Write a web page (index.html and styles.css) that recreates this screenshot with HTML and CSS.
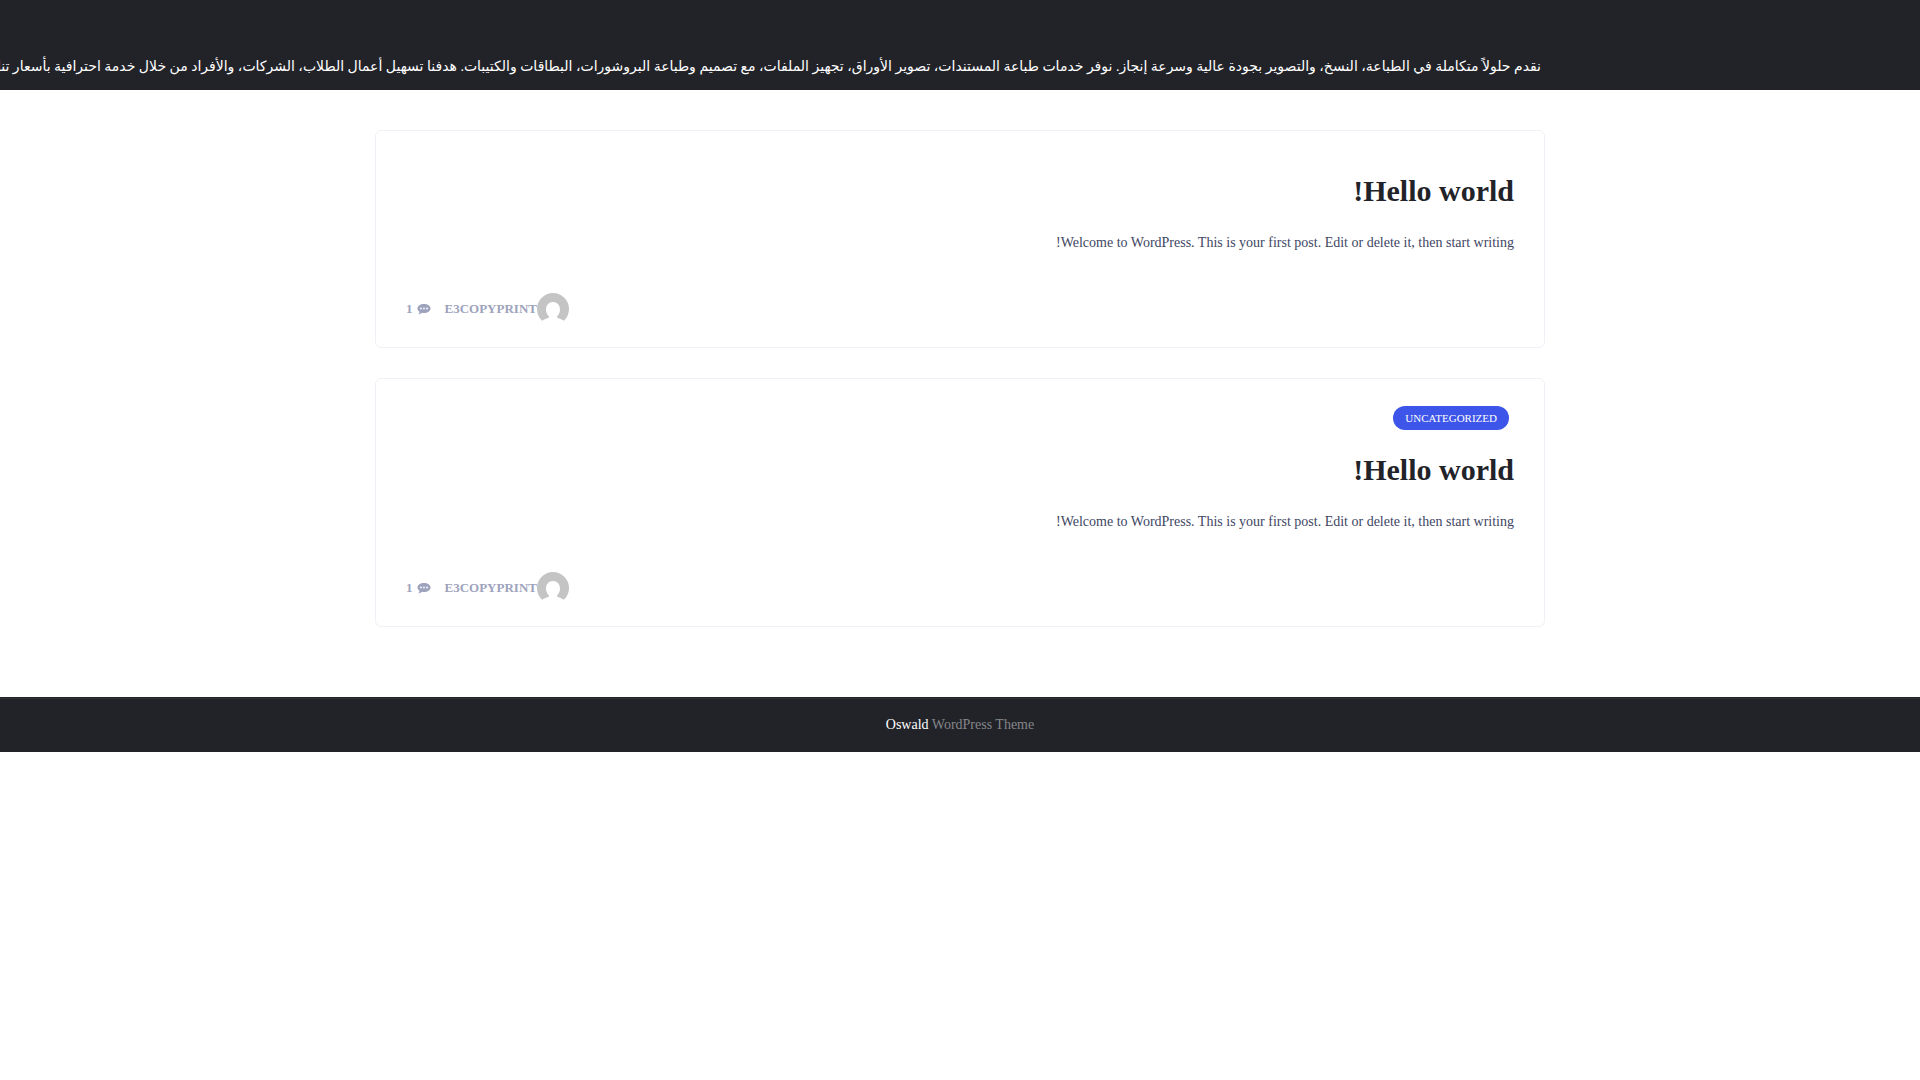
FILE: index.html
```html
<!DOCTYPE html>
<html lang="ar" dir="rtl">
<head>
<meta charset="utf-8">
<meta name="viewport" content="width=device-width, initial-scale=1">
<title>E3COPYPRINT</title>
<link rel="stylesheet" href="styles.css">
</head>
<body>
<svg class="sprite" aria-hidden="true">
  <symbol id="avatar" viewBox="0 0 32 32">
    <circle cx="16" cy="16" r="16" fill="#c4c4c4"/>
    <path fill="#fff" d="M16 9c4.200 0 7 3.200 7 7.500 0 3-1.300 5.500-3 6.900v.8c1 1.300 4.800 1.400 7 3.800V32H5v-4c2.200-2.400 6-2.500 7-3.800v-.8c-1.700-1.400-3-3.900-3-6.900C9 12.200 11.800 9 16 9z"/>
  </symbol>
  <symbol id="comment" viewBox="0 0 14 12">
    <path fill="#9ea3bd" fill-rule="evenodd" d="M7 1c3.600 0 6.500 1.900 6.500 4.500S10.600 10 7 10c-.6 0-1.200-.1-1.800-.2C4.200 10.700 2.800 11.300 1.300 11.300c.7-.7 1.200-1.500 1.200-2.500C1.300 8 .5 6.900.5 5.500.5 2.900 3.400 1 7 1zM4 4.600a.9.9 0 1 0 0 1.800.9.900 0 0 0 0-1.800zm3 0a.9.900 0 1 0 0 1.800.9.900 0 0 0 0-1.800zm3 0a.9.900 0 1 0 0 1.800.9.900 0 0 0 0-1.800z"/>
  </symbol>
</svg>

<header class="site-header">
  <div class="container">
    <p class="site-description">نقدم حلولاً متكاملة في الطباعة، النسخ، والتصوير بجودة عالية وسرعة إنجاز. نوفر خدمات طباعة المستندات، تصوير الأوراق، تجهيز الملفات، مع تصميم وطباعة البروشورات، البطاقات والكتيبات. هدفنا تسهيل أعمال الطلاب، الشركات، والأفراد من خلال خدمة احترافية بأسعار تناسب الجميع.</p>
  </div>
</header>

<main class="container posts">
  <article class="post">
    <h2 class="post-title"><a href="#">Hello world!</a></h2>
    <p class="post-excerpt">Welcome to WordPress. This is your first post. Edit or delete it, then start writing!</p>
    <footer class="post-meta">
      <a class="author" href="#"><svg class="avatar" aria-hidden="true"><use href="#avatar"/></svg>E3COPYPRINT</a>
      <a class="comments" href="#"><svg class="comment-icon" aria-hidden="true"><use href="#comment"/></svg>1</a>
    </footer>
  </article>

  <article class="post">
    <div class="post-categories"><a class="badge" href="#">UNCATEGORIZED</a></div>
    <h2 class="post-title"><a href="#">Hello world!</a></h2>
    <p class="post-excerpt">Welcome to WordPress. This is your first post. Edit or delete it, then start writing!</p>
    <footer class="post-meta">
      <a class="author" href="#"><svg class="avatar" aria-hidden="true"><use href="#avatar"/></svg>E3COPYPRINT</a>
      <a class="comments" href="#"><svg class="comment-icon" aria-hidden="true"><use href="#comment"/></svg>1</a>
    </footer>
  </article>
</main>

<footer class="site-footer" dir="ltr">
  <a href="#">Oswald</a> WordPress Theme
</footer>
</body>
</html>
```
FILE: styles.css
```css
* {
  box-sizing: border-box;
}

body {
  margin: 0;
  background: #fff;
  color: #404663;
  font-family: "Liberation Serif", "DejaVu Sans", serif;
  font-size: 14px;
  line-height: 24px;
}

a {
  color: inherit;
  text-decoration: none;
}

.sprite {
  display: none;
}

.container {
  max-width: 1170px;
  margin: 0 auto;
}

.site-header {
  overflow: hidden;
  padding: 55px 0 11px;
  background: #222329;
  color: #fff;
}

.site-description {
  margin: 0;
  padding: 0 4px;
  white-space: nowrap;
}

.posts {
  display: flex;
  flex-direction: column;
  gap: 30px;
  padding: 40px 0 70px;
}

.post {
  padding: 27px 30px 22px;
  border: 1px solid #f0f0f6;
  border-radius: 6px;
}

.post-categories {
  display: flex;
  padding: 0 5px;
  margin-bottom: 20px;
}

.badge {
  padding: 0 12px;
  border-radius: 12px;
  background: #3d55e8;
  color: #fff;
  font-size: 11px;
}

.post-title {
  margin: 13px 0;
  color: #222329;
  font-size: 30px;
  line-height: 40px;
}

.post-excerpt {
  margin: 20px 0 38px;
}

.post-meta {
  display: flex;
  justify-content: flex-end;
  gap: 14px;
  color: #9ea3bd;
  font-size: 13px;
  font-weight: bold;
}

.author,
.comments {
  display: flex;
  align-items: center;
}

.comments {
  gap: 4px;
}

.avatar {
  width: 32px;
  height: 32px;
}

.comment-icon {
  width: 14px;
  height: 12px;
}

.site-footer {
  padding: 15px 0;
  border-top: 1px solid #222329;
  background: #222329;
  box-shadow: inset 0 1px 0 #303136;
  color: #85868a;
  text-align: center;
}

.site-footer a {
  color: #fff;
}
```
